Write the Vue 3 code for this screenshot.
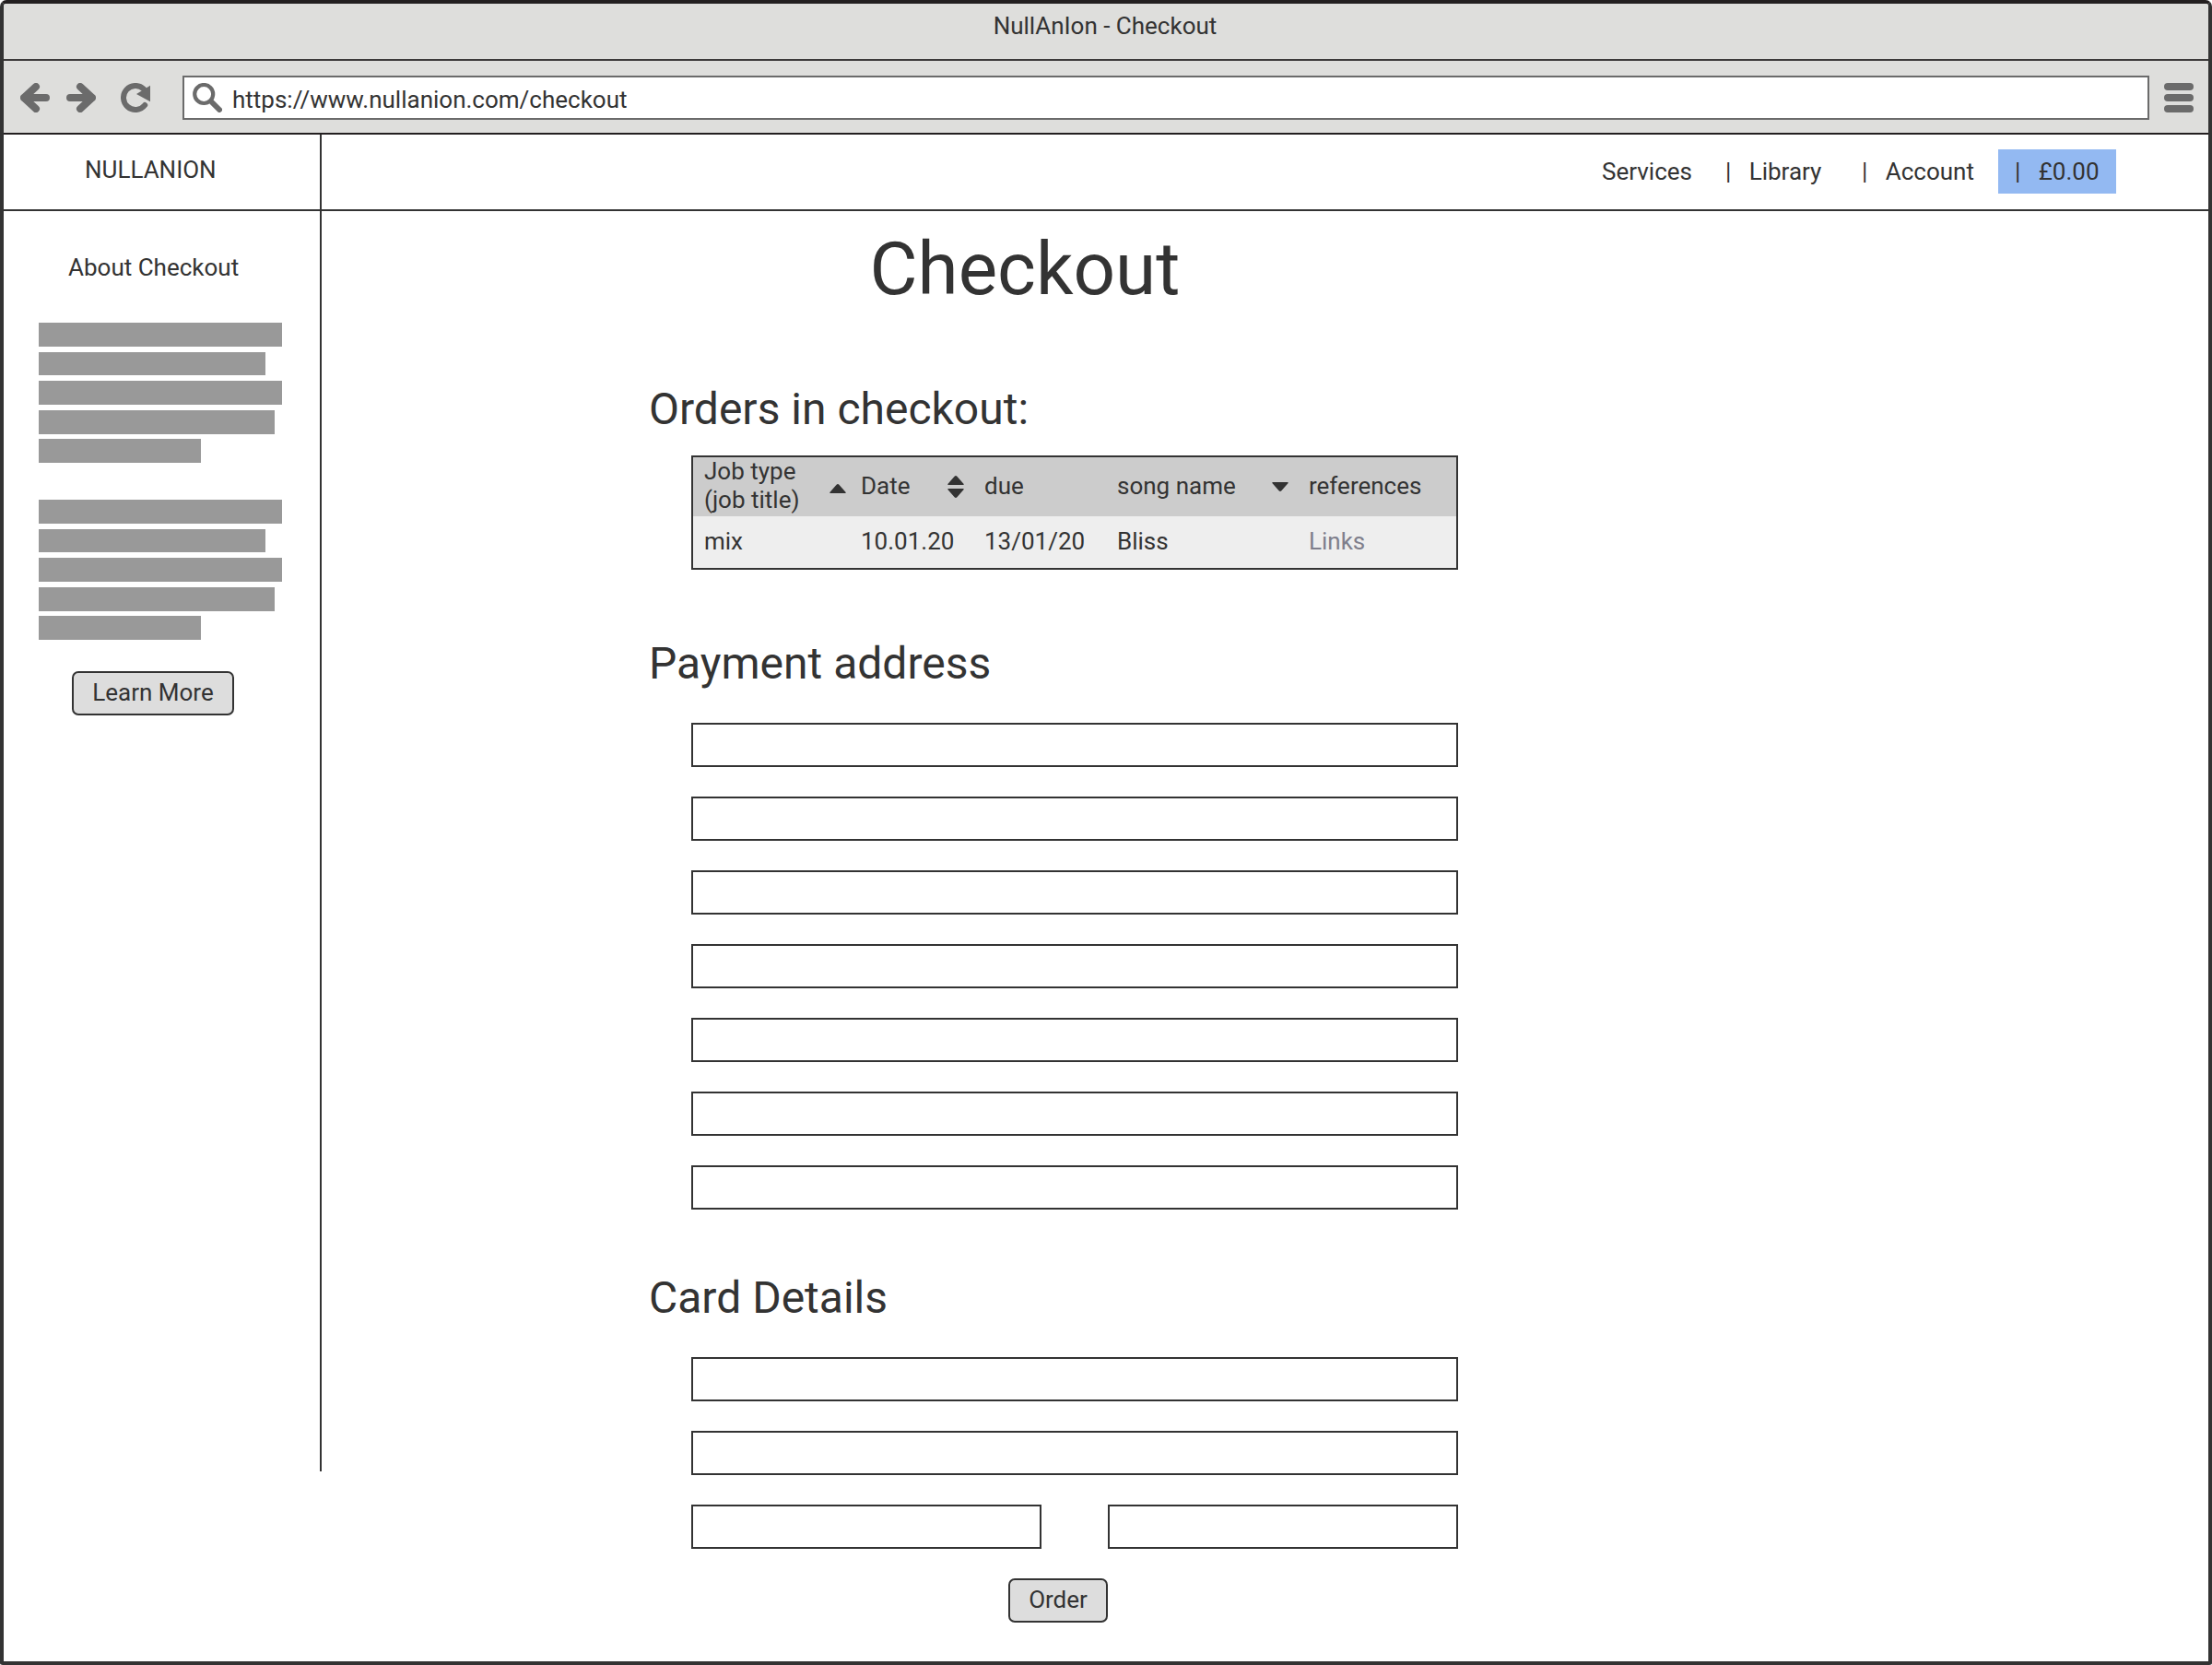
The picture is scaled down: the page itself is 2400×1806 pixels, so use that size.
<script setup>
const paragraphs = [
  [264, 246, 264, 256, 176],
  [264, 246, 264, 256, 176],
]
const addressFields = 7
</script>

<template>
  <div class="window">
    <div class="titlebar">NullAnIon - Checkout</div>
    <div class="toolbar">
      <svg class="icon back" viewBox="0 0 32 32"><path d="M17 4L4 16L17 28M4 16H28" /></svg>
      <svg class="icon forward" viewBox="0 0 32 32"><path d="M15 4L28 16L15 28M28 16H4" /></svg>
      <svg class="icon reload" viewBox="0 0 32 32">
        <path class="arc" d="M25 6.6A13 13 0 1 0 26.2 24" />
        <path class="head" d="M17 12L32 2.7V20.3Z" />
      </svg>
      <div class="address">
        <svg class="icon search" viewBox="0 0 32 32">
          <circle cx="12.2" cy="12" r="10" />
          <path d="M21 21L29 29" />
        </svg>
        <span>https://www.nullanion.com/checkout</span>
      </div>
      <div class="menu"><i></i><i></i><i></i></div>
    </div>
    <div class="header">
      <div class="brand">NULLANION</div>
      <nav>
        <a class="services">Services</a>
        <a class="library">|&nbsp;&nbsp;&nbsp;Library</a>
        <a class="account">|&nbsp;&nbsp;&nbsp;Account</a>
        <a class="basket">|&nbsp;&nbsp;&nbsp;£0.00</a>
      </nav>
    </div>
    <div class="body">
      <aside>
        <h4>About Checkout</h4>
        <div v-for="(lines, p) in paragraphs" :key="p" class="para">
          <div v-for="(w, i) in lines" :key="i" class="line" :style="{ width: w + 'px' }"></div>
        </div>
        <button class="learn">Learn More</button>
      </aside>
      <main>
        <h1>Checkout</h1>
        <h2 class="orders">Orders in checkout:</h2>
        <div class="table">
          <div class="row head">
            <div>Job type<br />(job title)<svg class="sort near" viewBox="0 0 18 10"><path d="M1 10Q-.5 10 .8 8.6L7.6 .8Q9 -.7 10.4 .8L17.2 8.6Q18.5 10 17 10Z" /></svg></div>
            <div>Date<svg class="sort both" viewBox="0 0 18 24"><path d="M1 10Q-.5 10 .8 8.6L7.6 .8Q9 -.7 10.4 .8L17.2 8.6Q18.5 10 17 10ZM1 14Q-.5 14 .8 15.4L7.6 23.2Q9 24.7 10.4 23.2L17.2 15.4Q18.5 14 17 14Z" /></svg></div>
            <div>due</div>
            <div>song name<svg class="sort" viewBox="0 0 18 10"><path d="M1 0Q-.5 0 .8 1.4L7.6 9.2Q9 10.7 10.4 9.2L17.2 1.4Q18.5 0 17 0Z" /></svg></div>
            <div>references</div>
          </div>
          <div class="row">
            <div>mix</div>
            <div>10.01.20</div>
            <div>13/01/20</div>
            <div>Bliss</div>
            <div class="link">Links</div>
          </div>
        </div>
        <h2 class="payment">Payment address</h2>
        <div class="fields">
          <div v-for="n in addressFields" :key="n" class="field"></div>
        </div>
        <h2 class="card">Card Details</h2>
        <div class="fields">
          <div class="field"></div>
          <div class="field"></div>
          <div class="pair">
            <div class="field"></div>
            <div class="field"></div>
          </div>
        </div>
        <button class="order">Order</button>
      </main>
    </div>
  </div>
</template>

<style>
body {
  margin: 0;
  background: #fff;
}
</style>

<style scoped>
* {
  box-sizing: border-box;
}
.window {
  width: 2400px;
  height: 1806px;
  border: 4px solid #333;
  border-top-color: #231f20;
  border-radius: 7px 7px 3px 3px;
  overflow: hidden;
  background: #fff;
  color: #333;
  font: 26px/30px Roboto, sans-serif;
  display: flex;
  flex-direction: column;
}
.titlebar {
  height: 62px;
  flex: none;
  background: #dededc;
  border-bottom: 2px solid #3c3a3a;
  text-align: center;
  padding: 9px 2px 0 0;
}
.toolbar {
  height: 80px;
  flex: none;
  background: #dededc;
  border-bottom: 2px solid #231f20;
  display: flex;
  align-items: center;
  padding: 0 16px 0 18px;
}
.icon {
  width: 32px;
  height: 32px;
  flex: none;
  fill: none;
  stroke: #6b6b6b;
  stroke-width: 8;
  stroke-linecap: round;
  stroke-linejoin: round;
  display: block;
  margin-top: 2px;
}
.forward {
  margin-left: 18px;
}
.reload {
  margin-left: 27px;
}
.reload .arc {
  stroke-width: 6;
}
.reload .head {
  fill: #6b6b6b;
  stroke: none;
}
.address {
  margin: 2px 16px 0 35px;
  flex: 1;
  height: 48px;
  border: 2px solid #6b6b6b;
  background: #fff;
  display: flex;
  align-items: center;
  padding-left: 9px;
}
.address span {
  margin: 4px 0 0 11px;
}
.search {
  margin-top: 0;
}
.search circle {
  stroke-width: 4.2;
}
.search path {
  stroke-width: 6;
}
.menu {
  width: 32px;
  margin-top: 2px;
  display: flex;
  flex-direction: column;
  gap: 4px;
}
.menu i {
  height: 8px;
  border-radius: 4px;
  background: #6b6b6b;
}
.header {
  height: 83px;
  flex: none;
  border-bottom: 2px solid #333;
  display: flex;
}
.brand {
  width: 345px;
  flex: none;
  border-right: 2px solid #333;
  padding: 23px 0 0 88px;
}
nav {
  flex: 1;
  display: flex;
  justify-content: flex-end;
  padding: 16px 100px 0 0;
}
nav a {
  height: 48px;
  padding-top: 9px;
  white-space: nowrap;
}
.services {
  width: 134px;
}
.library {
  width: 148px;
}
.account {
  width: 148px;
}
.basket {
  width: 128px;
  background: #93b9f2;
  padding-left: 18px;
}
.body {
  flex: 1;
  display: flex;
}
aside {
  width: 345px;
  height: 1367px;
  flex: none;
  border-right: 2px solid #333;
  padding: 46px 0 0 38px;
}
h1,
h2,
h4 {
  margin: 0;
  font-weight: 400;
}
h4 {
  font-size: 26px;
  line-height: 30px;
  padding-left: 32px;
  margin-bottom: 45px;
}
.para {
  height: 192px;
}
.line {
  height: 25.8px;
  margin-bottom: 5.8px;
  background: #999;
}
button {
  display: block;
  height: 48px;
  border: 2px solid #333;
  border-radius: 7px;
  background: #ddd;
  color: #333;
  font: 26px/30px Roboto, sans-serif;
  padding: 0 0 2px;
  text-align: center;
}
.learn {
  width: 176px;
  margin: -6px 0 0 36px;
}
main {
  width: 883px;
  margin-left: 352px;
  padding-top: 16px;
}
h1 {
  font-size: 80px;
  line-height: 94px;
  padding-left: 242.5px;
}
h2 {
  font-size: 48px;
  line-height: 56px;
  padding-left: 3px;
}
.orders {
  margin-top: 77px;
}
.table {
  margin: 22px 0 0 49px;
  width: 832px;
  height: 124px;
  border: 2px solid #333;
  background: #eee;
}
.row {
  display: grid;
  grid-template-columns: 170px 134px 144px 208px 172px;
  height: 54px;
  align-items: center;
}
.row > div {
  padding-left: 12px;
  position: relative;
}
.row.head {
  height: 64px;
  background: #ccc;
  line-height: 31px;
}
.row.head > div {
  padding-bottom: 2px;
}
.link {
  color: #7f7f8c;
}
.sort {
  position: absolute;
  right: 10.5px;
  top: 50%;
  width: 18px;
  height: 10px;
  margin-top: -5px;
  fill: #333;
}
.sort.near {
  right: 4.5px;
  margin-top: -3px;
}
.sort.both {
  height: 24px;
  margin-top: -12px;
}
.payment {
  margin-top: 74px;
}
.fields {
  margin: 36px 0 0 49px;
  width: 832px;
  display: flex;
  flex-direction: column;
  gap: 32px;
}
.field {
  height: 48px;
  border: 2px solid #333;
  background: #fff;
}
.pair {
  display: grid;
  grid-template-columns: 380px 380px;
  gap: 72px;
}
.card {
  margin-top: 68px;
}
.order {
  width: 108px;
  margin: 32px 0 0 393px;
}
</style>
